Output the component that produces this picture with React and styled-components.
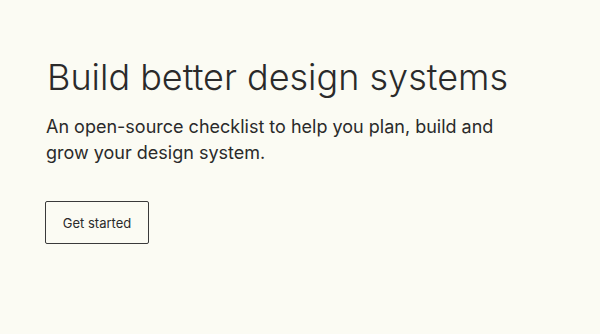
import React from "react";
import styled, { createGlobalStyle } from "styled-components";

const Global = createGlobalStyle`
  html, body { margin: 0; padding: 0; background: #fbfbf3; }
  body { font-family: Inter, "Liberation Sans", sans-serif; color: #2b2b2b; }
`;

const Page = styled.main`
  width: 600px;
  height: 334px;
  box-sizing: border-box;
  padding: 53px 45px 0 47px;
  background: #fbfbf3;
  display: flex;
  flex-direction: column;
  align-items: flex-start;
`;

const Title = styled.h1`
  margin: 0;
  font-size: 36px;
  line-height: 48px;
  font-weight: 300;
  letter-spacing: 0;
  color: #2a2a2a;
`;

const Lead = styled.p`
  margin: 13px 0 0 -1px;
  font-size: 18px;
  line-height: 26px;
  font-weight: 400;
  color: #2a2a2a;
  max-width: 480px;
`;

const Button = styled.button`
  margin-top: 35px;
  margin-left: -2px;
  width: 104px;
  height: 43px;
  box-sizing: border-box;
  border: 1px solid #3a3a3a;
  border-radius: 2px;
  background: transparent;
  font-family: inherit;
  font-size: 13px;
  color: #2a2a2a;
  cursor: pointer;
`;

export default function App() {
  return (
    <>
      <Global />
      <Page>
        <Title>Build better design systems</Title>
        <Lead>
          An open-source checklist to help you plan, build and grow your design
          system.
        </Lead>
        <Button>Get started</Button>
      </Page>
    </>
  );
}
